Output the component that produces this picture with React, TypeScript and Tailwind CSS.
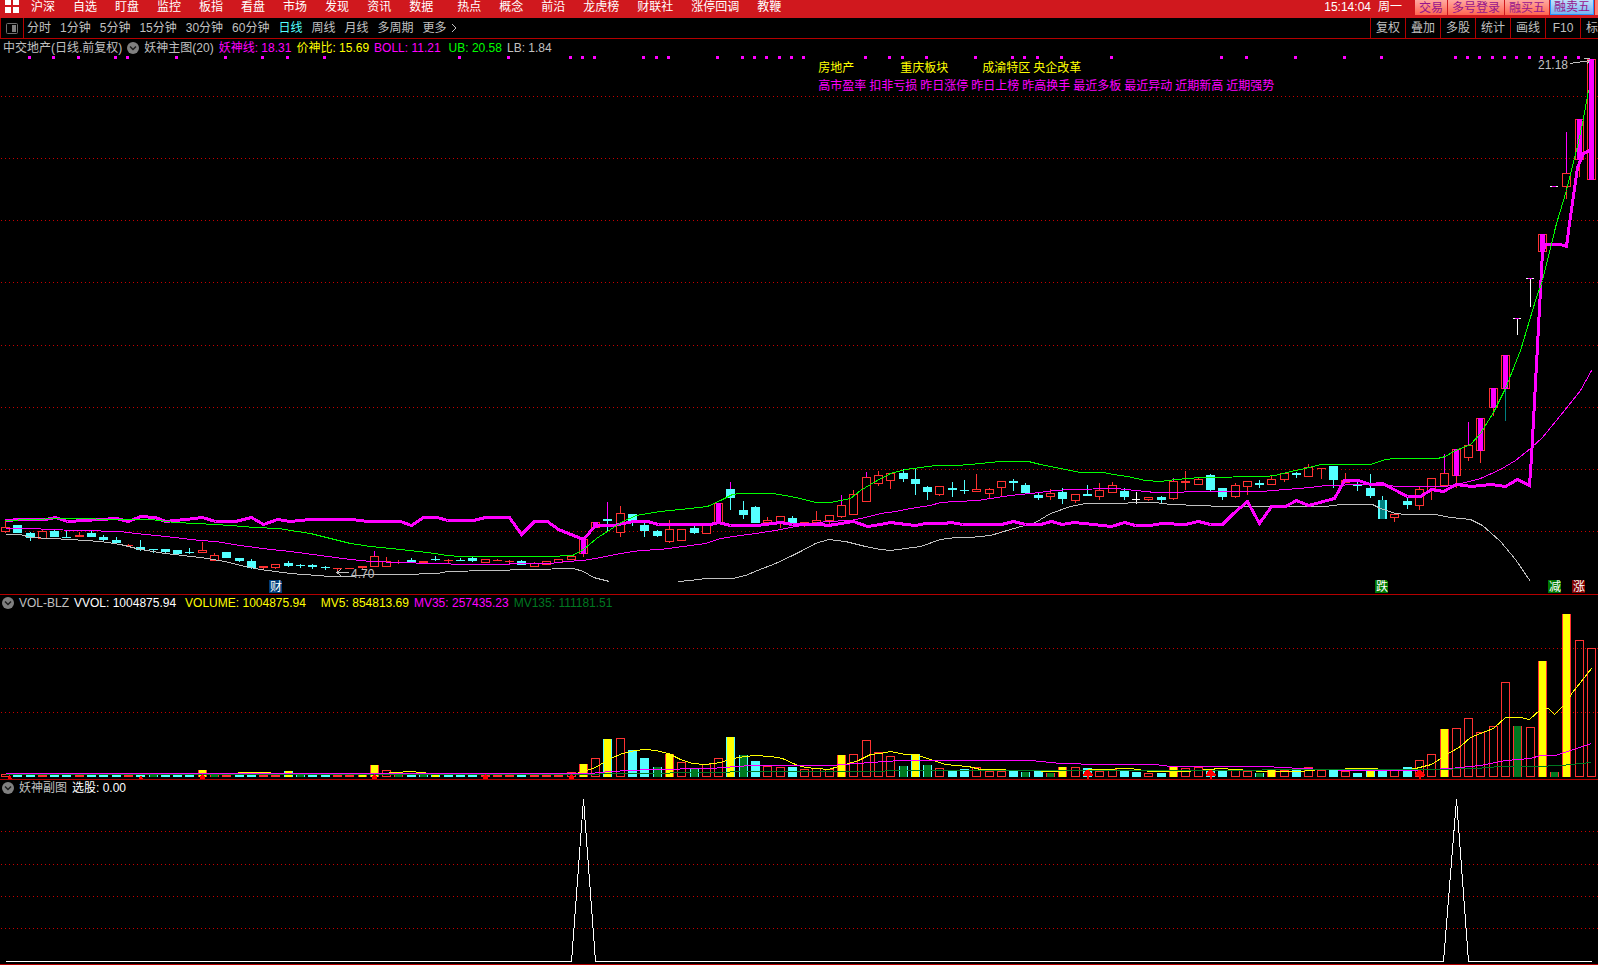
import { ReactNode } from 'react'

type Kind = 'r' | 'c' | 'm' | 't' | 'w'

// [kind, body top, body bottom, wick top, wick bottom]
type Candle = [Kind, number, number, number, number]

const PITCH = 12.295
const barX = (i: number) => Math.floor(5.5 + i * PITCH)

const RED = '#ff3232'
const CYAN = '#54ffff'
const PINK = '#ff00ff'
const GRAY = '#c0c0c0'
const GREEN = '#007820'
const GRID = '#c80000'

const candles: Candle[] = [
    ['r', 527, 532, 521, 533], ['c', 525, 533, 525, 533], ['c', 533, 538, 532, 541], ['r', 531, 539, 530, 539],
    ['c', 531, 537, 529, 537], ['c', 537, 538, 531, 538], ['r', 535, 537, 532, 537], ['c', 533, 537, 531, 537],
    ['c', 537, 540, 535, 542], ['c', 540, 543, 537, 543], ['r', 545, 546, 544, 547], ['c', 547, 550, 540, 551],
    ['c', 549, 550, 549, 553], ['c', 549, 552, 549, 553], ['c', 550, 554, 550, 554], ['c', 552, 553, 548, 554],
    ['r', 550, 553, 542, 553], ['r', 555, 561, 553, 561], ['c', 552, 558, 552, 558], ['c', 558, 561, 558, 562],
    ['c', 561, 568, 559, 569], ['r', 566, 568, 566, 569], ['r', 564, 568, 564, 569], ['c', 563, 566, 561, 567],
    ['c', 565, 566, 564, 568], ['c', 565, 567, 564, 569], ['c', 567, 568, 566, 570], ['r', 568, 569, 568, 572],
    ['r', 568, 569, 568, 569], ['r', 566, 568, 566, 569], ['r', 556, 567, 551, 567], ['r', 561, 567, 557, 567],
    ['r', 562, 563, 560, 564], ['c', 560, 562, 558, 562], ['r', 561, 563, 561, 563], ['c', 559, 560, 556, 561],
    ['r', 560, 561, 559, 563], ['c', 560, 561, 558, 561], ['c', 558, 561, 557, 562], ['r', 559, 563, 559, 563],
    ['r', 560, 561, 559, 561], ['r', 561, 562, 560, 563], ['c', 561, 565, 560, 565], ['r', 563, 567, 562, 567],
    ['r', 561, 565, 561, 565], ['r', 559, 563, 559, 563], ['r', 556, 560, 556, 560], ['m', 539, 554, 539, 557],
    ['m', 522, 528, 522, 528], ['c', 519, 521, 502, 532], ['r', 513, 533, 506, 537], ['c', 514, 522, 514, 526],
    ['c', 525, 531, 523, 537], ['c', 531, 536, 530, 537], ['r', 529, 542, 520, 543], ['r', 529, 541, 529, 541],
    ['c', 528, 533, 526, 534], ['r', 524, 534, 524, 534], ['m', 503, 523, 503, 523], ['c', 489, 498, 482, 510],
    ['c', 510, 515, 501, 519], ['c', 507, 523, 506, 523], ['r', 520, 523, 517, 523], ['r', 516, 523, 516, 528],
    ['c', 518, 523, 516, 523], ['r', 522, 525, 522, 527], ['r', 520, 523, 511, 523], ['r', 515, 521, 515, 524],
    ['r', 505, 517, 495, 518], ['r', 494, 515, 490, 515], ['r', 477, 502, 472, 502], ['r', 475, 484, 471, 486],
    ['r', 473, 481, 473, 489], ['c', 473, 479, 469, 482], ['c', 479, 484, 469, 495], ['c', 487, 492, 486, 500],
    ['r', 486, 495, 486, 496], ['c', 488, 490, 482, 497], ['c', 490, 491, 480, 494], ['r', 489, 492, 474, 492],
    ['r', 489, 494, 488, 498], ['r', 481, 488, 481, 496], ['c', 481, 483, 479, 491], ['c', 485, 493, 483, 493],
    ['c', 495, 498, 492, 500], ['r', 493, 497, 489, 500], ['c', 492, 499, 488, 504], ['r', 494, 501, 494, 503],
    ['c', 494, 496, 485, 496], ['r', 490, 497, 483, 500], ['r', 485, 493, 482, 493], ['c', 491, 497, 488, 500],
    ['w', 499, 500, 492, 504], ['r', 497, 500, 497, 501], ['c', 497, 500, 496, 503], ['r', 481, 499, 478, 500],
    ['r', 481, 483, 471, 490], ['r', 479, 485, 478, 485], ['c', 475, 490, 474, 491], ['c', 488, 497, 488, 500],
    ['r', 485, 497, 483, 498], ['r', 481, 487, 481, 495], ['c', 483, 485, 480, 488], ['r', 479, 485, 476, 485],
    ['r', 473, 480, 473, 482], ['c', 473, 475, 472, 478], ['r', 467, 477, 464, 477], ['r', 468, 469, 468, 479],
    ['c', 466, 480, 466, 488], ['r', 480, 483, 473, 483], ['c', 485, 486, 480, 491], ['c', 488, 496, 474, 498],
    ['t', 500, 519, 496, 519], ['r', 514, 518, 514, 522], ['c', 501, 505, 498, 509], ['r', 489, 506, 487, 510],
    ['r', 478, 491, 478, 500], ['r', 473, 486, 454, 486], ['m', 449, 476, 449, 488], ['r', 445, 458, 422, 461],
    ['m', 418, 451, 418, 463], ['m', 388, 408, 388, 416], ['m', 355, 389, 355, 421], ['w', 318, 319, 318, 335],
    ['w', 278, 279, 278, 307], ['m', 234, 252, 234, 252], ['w', 186, 187, 186, 187], ['r', 173, 187, 132, 199],
    ['m', 119, 160, 119, 177], ['m', 59, 180, 59, 180],
]

// upper shadows drawn in pink instead of the body colour
const pinkShadow = [30, 49, 59, 68, 70, 95, 117, 119, 127]

const signalDots = [
    2, 4, 6, 9, 10, 14, 18, 21, 23, 26, 37, 41, 46, 47, 48, 52, 53, 54, 58, 60, 61, 62, 63, 64, 65, 70, 72, 73, 75,
    79, 82, 83, 84, 86, 90, 99, 101, 105, 109, 112, 118, 119, 120, 121, 122, 123, 124, 125, 126, 127, 128,
]

// colour code + top edge. Upper case marks a bar with the other edge colour
const volumes = (
    'r774 c775 c775 r775 c775 c775 r775 c775 c775 c775 r775 c773 g775 c775 c775 c775 y770 G774 r775 c773 c774 r775 r775 Y771 g775 c775 ' +
    'c775 r775 r775 y775 y765 r770 G772 c775 g775 Y775 c775 c775 c775 r775 r775 r775 c775 r775 r775 r775 r772 y764 ' +
    'r758 Y739 r738 c750 c758 g767 y754 r762 g769 r764 r758 Y737 g755 c761 r766 r767 c767 r769 r768 r769 y755 r754 ' +
    'r740 r752 r756 g766 Y754 g765 r768 c771 c769 r767 r771 r771 c771 g772 c771 G773 y767 r767 c768 r771 r769 c770 ' +
    'c772 r773 c773 y767 r768 r767 c771 c770 r770 r771 g773 y770 r770 c769 r767 r770 c770 r771 c773 Y768 c771 r770 ' +
    'c767 r760 r754 y729 r728 r718 r732 r726 r682 G726 r727 y661 G772 y614 r640 r648'
).split(' ')

const upperBand =
    '5,520 30,519 60,518 80,518 110,519 150,519 175,522 215,524 230,525 255,527 278,528 290,530 310,533 330,538 350,543 370,546 400,549 427,552 447,555 460,556 548,556 572,555 583,549 596,538 610,529 622,521 636,515 660,511 680,509 707,506 720,500 732,494 740,493 772,493 785,495 800,498 815,502 830,502 850,498 860,490 875,481 890,473 905,469 935,465 957,465 980,463 1000,461 1028,461 1040,464 1050,466 1065,469 1080,472 1103,472 1113,474 1127,476 1145,480 1160,481 1175,479 1200,477 1265,476 1275,475 1290,471 1305,468 1320,464 1370,464 1385,459 1395,458 1437,458 1445,456 1455,450 1470,444 1480,433 1493,412 1505,388 1520,350 1535,300 1542,280 1556,223 1566,190 1576,150 1582,123 1588,90'
const middleBand =
    '5,528 35,528 45,529 80,530 120,531 135,533 165,536 200,540 215,541 240,545 270,549 290,551 320,555 350,559 370,561 400,562 430,563 470,564 550,563 565,561 583,560 600,557 620,553 640,550 660,549 690,545 705,543 720,538 740,535 755,533 775,530 790,527 825,521 850,520 865,517 880,513 895,511 910,508 930,505 940,502 955,501 978,500 990,498 1010,495 1030,493 1055,490 1070,489 1115,488 1135,490 1155,492 1178,492 1190,491 1260,491 1285,489 1310,487 1325,485 1365,484 1385,485 1400,486 1445,486 1465,482 1480,478 1500,469 1515,460 1530,448 1542,437 1560,415 1580,390 1591,370'
const lowerBandLeft =
    '5,534 20,534 30,537 70,539 100,541 120,544 140,549 165,553 200,557 225,561 240,565 260,569 290,573 330,576 350,576 370,574 400,574 437,573 447,571 490,570 530,569 573,568 583,571 593,577 609,581'
const lowerBandRight =
    '678,581 690,580 705,578 732,578 745,575 757,570 775,563 790,556 800,551 815,543 828,539 845,541 865,546 880,549 890,550 905,548 920,546 940,539 955,537 970,537 990,535 1010,529 1035,522 1050,513 1070,506 1085,503 1120,503 1135,502 1155,502 1170,504 1200,505 1220,506 1325,506 1340,504 1372,504 1380,508 1395,513 1405,514 1435,514 1450,517 1470,519 1482,525 1500,541 1515,559 1530,581'
const demonLine =
    '5,520 20,519 45,519 55,517 67,521 100,519 116,518 128,521 140,516 155,517 165,521 185,519 202,517 215,521 235,521 251,517 263,524 277,519 290,521 310,519 352,519 367,521 400,521 411,525 423,517 437,517 447,520 473,520 485,517 509,517 521,534 534,521 547,521 558,529 583,539 595,525 613,525 633,521 647,521 658,524 710,524 718,522 730,525 757,525 780,522 792,524 820,524 828,525 853,521 867,526 880,524 890,522 906,524 915,525 925,523 943,523 951,522 962,524 1001,524 1013,521 1025,524 1040,524 1051,521 1062,524 1073,522 1093,524 1111,526 1124,522 1135,525 1150,525 1161,523 1185,524 1198,521 1210,524 1222,524 1233,513 1247,501 1259,523 1271,506 1285,506 1296,500 1308,505 1323,501 1334,498 1344,480 1358,480 1370,484 1382,483 1407,496 1420,496 1431,489 1443,491 1456,484 1471,486 1491,484 1505,486 1517,479 1529,485 1531,457 1542,252 1545,244 1560,244 1566,246 1569,223 1577,167 1583,153 1591,149'

const mv5 =
    '195,774 230,773 245,772 345,774 382,773 410,771 440,774 570,774 580,772 595,767 610,758 622,753 635,750 645,749 655,750 668,753 680,759 692,763 705,764 720,762 732,758 745,756 755,755 770,756 782,758 795,764 805,767 828,769 845,764 858,760 870,754 880,753 890,751 905,754 918,755 930,759 945,764 955,765 968,766 980,769 1030,770 1050,771 1075,770 1100,769 1130,768 1150,771 1185,771 1220,768 1250,770 1260,771 1300,771 1320,769 1370,768 1400,770 1415,768 1431,764 1448,753 1460,746 1470,737 1480,733 1493,728 1505,717 1520,717 1529,719 1540,709 1548,708 1554,714 1565,703 1572,692 1580,682 1591,668'
const mv35 =
    '5,773 110,773 560,773 590,773 610,771 650,769 710,768 750,765 830,765 870,762 900,760 1030,760 1060,763 1100,764 1155,764 1170,766 1265,766 1300,768 1350,770 1410,770 1450,768 1480,765 1505,760 1530,758 1540,755 1555,755 1570,750 1591,743'
const mv135 =
    '5,774 560,774 640,773 760,771 880,771 890,770 1100,770 1430,769 1475,768 1500,766 1535,766 1560,765 1591,762'

const menu = ['沪深', '自选', '盯盘', '监控', '板指', '看盘', '市场', '发现', '资讯', '数据']
const customMenu = ['热点', '概念', '前沿', '龙虎榜', '财联社', '涨停回调', '教鞭']
const periods = ['分时', '1分钟', '5分钟', '15分钟', '30分钟', '60分钟', '日线', '周线', '月线', '多周期']
const tools = ['复权', '叠加', '多股', '统计', '画线', 'F10']
const traits = ['高市盈率', '扣非亏损', '昨日涨停', '昨日上榜', '昨高换手', '最近多板', '最近异动', '近期新高', '近期强势']

function Grid({ rows }: { rows: number[] }) {
    return (
        <>
            {rows.map((y) => (
                <line key={y} x1="1" x2="1598" y1={y + 0.5} y2={y + 0.5} stroke={GRID} strokeDasharray="1 3" />
            ))}
        </>
    )
}

function Curve({ points, color, width = 1 }: { points: string; color: string; width?: number }) {
    return <polyline points={points} fill="none" stroke={color} strokeWidth={width} transform="translate(0.5 0.5)" />
}

function CandleBar({ data, i }: { data: Candle; i: number }) {
    const [kind, top, bottom, high, low] = data
    const x = barX(i)
    const h = bottom - top
    const color = kind === 'w' ? '#ffffff' : kind === 'r' || kind === 'm' ? RED : CYAN
    const upper = pinkShadow.includes(i) ? PINK : color
    const lower = i === 122 ? '#008080' : color
    return (
        <g>
            {high < top && <rect x={x} y={high} width="1" height={top - high} fill={upper} />}
            {low > bottom && <rect x={x} y={bottom} width="1" height={low - bottom} fill={lower} />}
            {color === RED && h > 2 ? (
                <rect x={x - 3.5} y={top + 0.5} width="8" height={h - 1} fill="#000" stroke={RED} />
            ) : (
                <rect x={x - 4} y={top} width={kind === 'w' ? 8 : 9} height={h} fill={color} />
            )}
            {kind === 'm' && <rect x={x - 2} y={top} width="5" height={h} fill={PINK} />}
            {kind === 't' && <rect x={x - 2} y={top} width="5" height={h} fill="#008080" />}
            {kind === 'w' && i > 100 && <rect x={x - 2} y={top} width="4" height="1" fill={PINK} />}
        </g>
    )
}

function VolumeBar({ code, i }: { code: string; i: number }) {
    const kind = code[0].toLowerCase()
    const alt = code[0] !== kind
    const top = Number(code.slice(1))
    const x = barX(i)
    const h = 777 - top
    if (kind === 'r') return <rect x={x - 3.5} y={top + 0.5} width="8" height={Math.max(h - 1, 1)} fill="none" stroke={RED} />
    if (kind === 'c') return <rect x={x - 4} y={top} width="9" height={h} fill={CYAN} />
    const edge = kind === 'y' ? (alt ? CYAN : RED) : alt ? RED : CYAN
    return (
        <g>
            <rect x={x - 4} y={top} width="9" height={h} fill={edge} />
            <rect x={x - 3} y={top} width="7" height={h} fill={kind === 'y' ? '#ffff00' : GREEN} />
        </g>
    )
}

function EventMark({ x, fill, label }: { x: number; fill: string; label: string }) {
    return (
        <g>
            <path d={`M${x} 580h11l2 2v11h-13z`} fill={fill} />
            <text x={x + 1} y="591" fontSize="12" fill="#fff">{label}</text>
        </g>
    )
}

function PanelToggle({ label }: { label: string }) {
    return (
        <button type="button" aria-label={label} className="shrink-0">
            <svg width="12" height="12" viewBox="0 0 12 12" className="block">
                <circle cx="6" cy="6" r="6" fill="#808080" />
                <path d="M3 4.5l3 3 3-3" fill="none" stroke="#1c1c1c" strokeWidth="1.5" />
            </svg>
        </button>
    )
}

function Plot({ top, height, label, children }: { top: number; height: number; label: string; children: ReactNode }) {
    return (
        <svg
            viewBox={`0 ${top} 1598 ${height}`}
            className="block h-auto w-full"
            shapeRendering="crispEdges"
            role="img"
            aria-label={label}
        >
            {children}
        </svg>
    )
}

export default function App() {
    return (
        <div className="min-h-screen overflow-hidden bg-black font-['Liberation_Sans','Noto_Sans_CJK_SC',sans-serif] text-xs text-[#c0c0c0]">
            {/* Main menu */}
            <header className="flex h-[18px] justify-between overflow-hidden bg-[#d0181e] leading-[14px] whitespace-nowrap text-white">
                <nav className="flex">
                    <button type="button" aria-label="菜单" className="mr-3 ml-[5px] h-[13px]">
                        <svg width="14" height="13" viewBox="0 0 14 13" fill="#fff" shapeRendering="crispEdges">
                            <path d="M0 0h6v5H0zM8 0h6v5H8zM0 7h6v6H0zM8 7h6v6H8z" />
                        </svg>
                    </button>
                    <div className="flex gap-[18px]">
                        {menu.map((m) => (
                            <a key={m} href="#">{m}</a>
                        ))}
                    </div>
                    <div className="ml-6 flex gap-[18px]">
                        {customMenu.map((m) => (
                            <a key={m} href="#">{m}</a>
                        ))}
                    </div>
                </nav>
                <div className="flex">
                    <time className="mr-[7px]">15:14:04</time>
                    <span className="mr-[13px]">周一</span>
                    <div className="flex h-[15px] gap-px text-[#96148c]">
                        <button type="button" className="w-8 bg-linear-to-b from-[#ffa8a0] to-[#ff6450]">交易</button>
                        <button type="button" className="w-14 bg-linear-to-b from-[#ffa8a0] to-[#ff6450]">多号登录</button>
                        <button type="button" className="w-11 bg-linear-to-b from-[#ffa8a0] to-[#ff6450]">融买五</button>
                        <button type="button" className="w-11 border border-t-0 border-[#2896ff] bg-linear-to-b from-[#c0e0fa] to-[#78b4f0]">融卖五</button>
                        <span className="w-[3px] bg-[#ff8070]" />
                    </div>
                </div>
            </header>

            {/* Period bar */}
            <div className="flex h-[21px] justify-between overflow-hidden border-b border-[#b40000] whitespace-nowrap">
                <div className="flex items-center">
                    <button type="button" aria-label="侧栏" className="mr-[3px] flex h-full w-6 items-center justify-center border-x border-[#b40000]">
                        <svg width="12" height="11" viewBox="0 0 12 11">
                            <rect x="0.5" y="0.5" width="11" height="10" rx="1" fill="none" stroke="#707070" />
                            <path d="M6 2h4v7H6z" fill="#808080" />
                        </svg>
                    </button>
                    <div className="flex items-center gap-[9px]">
                        {periods.map((p) => (
                            <button key={p} type="button" className={p === '日线' ? 'text-[#54ffff]' : ''}>{p}</button>
                        ))}
                        <button type="button" className="flex items-center gap-1">
                            更多
                            <svg width="6" height="10" viewBox="0 0 6 10" fill="none" stroke="#c0c0c0">
                                <path d="M1 1l4 4-4 4" />
                            </svg>
                        </button>
                    </div>
                </div>
                <div className="flex">
                    {tools.map((t) => (
                        <button key={t} type="button" className="w-[35px] border-l border-[#b40000]">{t}</button>
                    ))}
                    <button type="button" className="border-l border-[#b40000] pl-[5px]">标</button>
                </div>
            </div>

            {/* Price chart */}
            <section className="relative border-b border-[#b40000]">
                <div className="flex h-[17px] items-center gap-[5px] pl-[3px] whitespace-nowrap">
                    <span>中交地产(日线.前复权)</span>
                    <PanelToggle label="主图指标" />
                    <span>妖神主图(20)</span>
                    <span className="text-[#ff00ff]">妖神线: 18.31</span>
                    <span className="text-[#ffff00]">价神比: 15.69</span>
                    <span className="text-[#ff00ff]">BOLL: 11.21</span>
                    <span className="ml-[3px] text-[#00ff00]">UB: 20.58</span>
                    <span>LB: 1.84</span>
                </div>
                <Plot top={56} height={538} label="日线主图">
                    <Grid rows={[96, 158, 220, 282, 345, 407, 469, 531]} />
                    {signalDots.map((i) => (
                        <rect key={i} x={barX(i) - 2} y="56" width="3" height="3" fill={PINK} />
                    ))}
                    {candles.map((c, i) => (
                        <CandleBar key={i} data={c} i={i} />
                    ))}
                    <Curve points={lowerBandLeft} color={GRAY} />
                    <Curve points={lowerBandRight} color={GRAY} />
                    <Curve points={middleBand} color={PINK} />
                    <Curve points={demonLine} color={PINK} width={3} />
                    <Curve points={upperBand} color="#00ff00" />
                    <path d="M1570 63.5L1590 60.5M1584 58.5h6M1590 60l-3 4" fill="none" stroke={GRAY} />
                    <text x="1538" y="69" fontSize="12" fill={GRAY}>21.18</text>
                    <path d="M349 572.5H337M341 569.5l-4 3 4 3" fill="none" stroke={GRAY} />
                    <text x="351" y="578" fontSize="12" fill={GRAY}>4.70</text>
                    <EventMark x={269} fill="#003c78" label="财" />
                    <EventMark x={1375} fill="#007800" label="跌" />
                    <EventMark x={1548} fill="#007800" label="减" />
                    <EventMark x={1572} fill="#820000" label="涨" />
                </Plot>
                {/* Stock tags over the plot */}
                <div className="absolute top-5 left-[51.2%] whitespace-nowrap">
                    <div className="flex h-[18px] items-center text-[#ffff00]">
                        <span className="mr-[46px]">房地产</span>
                        <span className="mr-[34px]">重庆板块</span>
                        <span className="mr-[3px]">成渝特区</span>
                        <span>央企改革</span>
                    </div>
                    <div className="flex h-[18px] items-center gap-[3px] text-[#ff00ff]">
                        {traits.map((t) => (
                            <span key={t}>{t}</span>
                        ))}
                    </div>
                </div>
            </section>

            {/* Volume */}
            <section className="border-b border-[#b40000]">
                <div className="flex h-4 items-center gap-[5px] pl-[2px] whitespace-nowrap">
                    <PanelToggle label="成交量指标" />
                    <span>VOL-BLZ</span>
                    <span className="mr-1 text-white">VVOL: 1004875.94</span>
                    <span className="mr-[10px] text-[#ffff00]">VOLUME: 1004875.94</span>
                    <span className="text-[#ffff00]">MV5: 854813.69</span>
                    <span className="text-[#ff00ff]">MV35: 257435.23</span>
                    <span className="text-[#007820]">MV135: 111181.51</span>
                </div>
                <Plot top={611} height={168} label="成交量">
                    <Grid rows={[648, 712]} />
                    {volumes.map((v, i) => (
                        <VolumeBar key={i} code={v} i={i} />
                    ))}
                    <Curve points={mv5} color="#ffff00" />
                    <Curve points={mv35} color={PINK} />
                    <Curve points={mv135} color={GREEN} />
                    {[1087, 1210, 1419].map((x) => (
                        <path key={x} d={`M${x - 1} 770h3l4 5v1h-4v3h-2v-3h-4v-1z`} fill="#ff0000" />
                    ))}
                    {[202, 374, 485, 571].map((x) => (
                        <path key={x} d={`M${x} 774h1l2 3v2h-5v-2z`} fill="#ff0000" />
                    ))}
                    {[9, 140].map((x) => (
                        <path key={x} d={`M${x} 776h2l1 3h-4z`} fill="#ff0000" />
                    ))}
                </Plot>
            </section>

            {/* Stock picker */}
            <section className="border-b border-[#b40000]">
                <div className="flex h-4 items-center gap-[5px] pl-[2px] whitespace-nowrap">
                    <PanelToggle label="副图指标" />
                    <span>妖神副图</span>
                    <span className="text-white">选股: 0.00</span>
                </div>
                <Plot top={796} height={168} label="选股信号">
                    <Grid rows={[831, 864, 896, 928]} />
                    <Curve points="5,961 571,961 583,799 595,961 1443,961 1456,799 1468,961 1591,961" color="#ffffff" />
                </Plot>
            </section>
        </div>
    )
}
